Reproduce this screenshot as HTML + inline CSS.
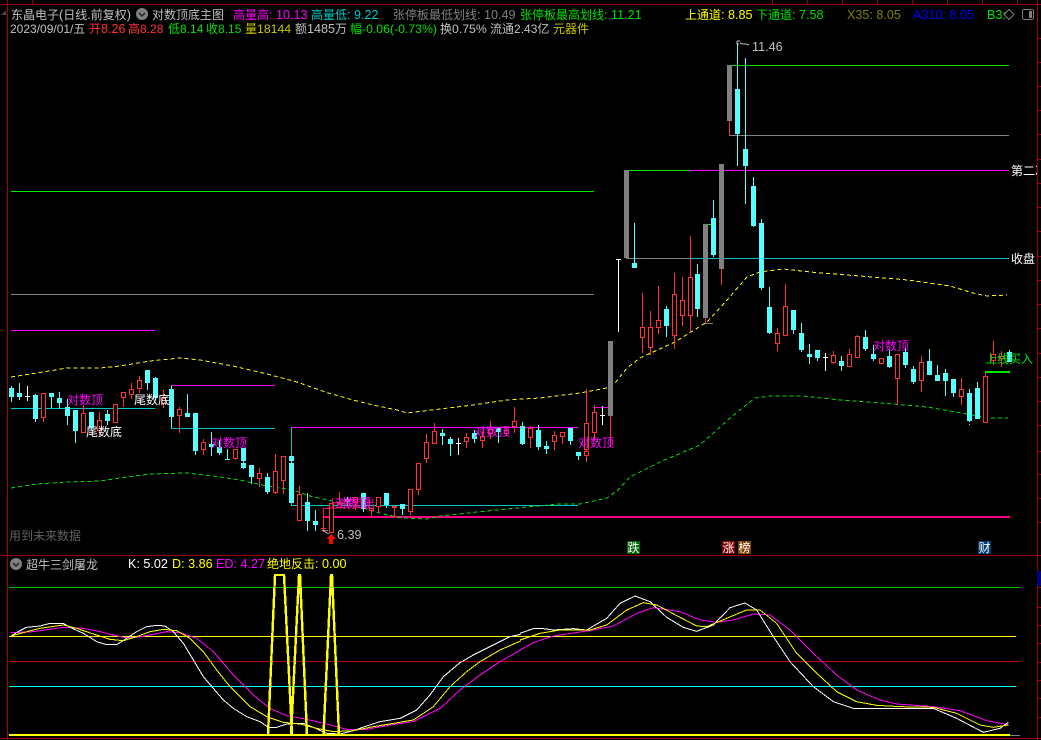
<!DOCTYPE html>
<html lang="zh"><head><meta charset="utf-8"><title>东晶电子</title>
<style>
html,body{margin:0;padding:0;background:#000;width:1041px;height:740px;overflow:hidden}
svg{display:block}
text{font-family:"Liberation Sans","WenQuanYi Zen Hei","Noto Sans CJK SC",sans-serif;font-size:12px}
.n{font-size:12.6px}
.d{font-size:12px}
.m{font-size:12.25px}
.c path,.c polyline,.c line,.c rect{shape-rendering:crispEdges}
</style></head><body>
<svg width="1041" height="740" viewBox="0 0 1041 740" xmlns="http://www.w3.org/2000/svg">
<rect width="1041" height="740" fill="#000"/>
<g class="c" fill="none">
<!-- frame -->
<path stroke="#a00000" d="M0 4.5H1041M0 555.5H1041M0 738.5H1041M7.5 0V740M1037.5 0V740M32.5 0V4M772.5 0V4M807.5 0V4M842.5 0V4M877.5 0V4M912.5 0V4M947.5 0V4M982.5 0V4M1017.5 0V4M1037 38.5h4M1037 62.5h4M1037 86.5h4M1037 110.5h4M1037 134.5h4M1037 159.5h4M1037 183.5h4M1037 207.5h4M1037 231.5h4M1037 256.5h4M1037 280.5h4M1037 304.5h4M1037 328.5h4M1037 353.5h4M1037 377.5h4M1037 401.5h4M1037 425.5h4M1037 451.5h4M1037 474.5h4M1037 498.5h4M1037 522.5h4M1037 587.5h4M1037 607.5h4M1037 625.5h4M1037 643.5h4M1037 662.5h4M1037 680.5h4M1037 698.5h4M1037 717.5h4"/>
<!-- horizontal levels -->
<path stroke="#00e800" d="M11 191.5H594M629 170.5H690M732 65.5H1009M708 224.5H713"/>
<path stroke="#808080" d="M11 294.5H594M626 258.5H690M729 135.5H1009M705 323.5H713M322 530.5H328"/>
<path stroke="#ff00ff" d="M11 330.5H155M171 385.5H275M291 427.5H578M690 170.5H1009M594 407.5H608"/>
<path stroke="#00c8c8" d="M11 408.5H155M171 428.5H275M291 505.5H578M690 258.5H1009M291.5 427V505M171.5 385V428"/>
<path stroke="#ff0080" stroke-width="2" d="M323 517H1010"/>
<path stroke="#ff0080" d="M323.5 508V517M323 508.5H331"/>
<path stroke="#00e800" stroke-width="2" d="M985 372H1010"/>
<!-- channel lines -->
<polyline stroke="#ffff00" stroke-dasharray="4 3" points="11,377 37,373 67,368 100,368 120,366 150,361 180,358 200,360 233,366 267,374 297,382 325,392 353,400 373,405 397,410 407,413 440,409 473,405 507,400 540,398 580,393 607,388 615,383 627,368 640,358 675,342 707,322 727,300 747,277 760,272 783,269 820,273 860,276 908,280 950,286 973,293 987,296 1007,295"/>
<polyline stroke="#00e000" stroke-dasharray="4 3" points="11,488 37,484 67,482 100,481 127,477 150,474 187,473 213,476 240,480 267,486 293,490 310,496 337,502 363,508 383,514 403,518 427,519 440,516 487,511 527,507 560,504 580,504 607,498 618,490 630,477 660,462 700,445 730,418 755,398 770,396 803,396 840,400 893,404 927,407 967,414 987,418 1008,418"/>
<!-- gray blocks -->
<path fill="#808080" d="M608 341h5v75h-5zM624 170h5v88h-5zM703 224h5v94h-5zM719 164h5v105h-5zM727 65h5v56h-5z"/>
<!-- cyan wicks -->
<path stroke="#54ffff" d="M11.5 386V402M19.5 383V400M35.5 394V422M51.5 393V408M59.5 392V409M67.5 399V425M75.5 410V443M91.5 412V430M107.5 410V425M147.5 370V390M155.5 377V400M171.5 386V428M187.5 394V417M195.5 413V455M211.5 432V456M219.5 440V455M227.5 449V459M225 459.5H230M243.5 448V469M251.5 465V484M267.5 473V494M291.5 456V503M307.5 493V531M315.5 510V531M347.5 497V507M363.5 493V512M386.5 493V508M402.5 504V515M442.5 429V445M450.5 437V456M474.5 430V443M498.5 428V443M522.5 422V445M538.5 425V450M546.5 441V454M570.5 428V445M578.5 452V460M634.5 223V268M666.5 306V337M697.5 264V317M713.5 200V257M737.5 43V166M745.5 58V204M753.5 177V227M761.5 219V290M769.5 287V334M793.5 310V334M801.5 323V352M809.5 344V364M817.5 350V361M841.5 356V371M865.5 330V351M873.5 345V361M889.5 350V368M905.5 348V368M913.5 366V384M929.5 349V375M937.5 365V381M945.5 369V396M953.5 379V397M969.5 389V422M969.5 424V425M977.5 382V419M1009.5 350V362"/>
<!-- cyan bodies -->
<path fill="#54ffff" d="M9 388h5V397h-5zM17 393h5V397h-5zM33 395h5V419h-5zM49 393h5V397h-5zM57 398h5V403h-5zM65 407h5V416h-5zM73 410h5V431h-5zM89 412h5V428h-5zM105 414h5V421h-5zM145 370h5V383h-5zM153 378h5V398h-5zM169 389h5V417h-5zM185 413h5V417h-5zM193 413h5V451h-5zM209 444h5V447h-5zM217 447h5V453h-5zM241 448h5V461h-5zM241 463h5V468h-5zM249 465h5V477h-5zM265 477h5V492h-5zM289 456h5V461h-5zM289 463h5V503h-5zM305 502h5V521h-5zM313 521h5V525h-5zM345 499h5V502h-5zM361 493h5V509h-5zM384 493h5V505h-5zM400 504h5V509h-5zM440 433h5V436h-5zM448 439h5V444h-5zM472 433h5V439h-5zM496 428h5V432h-5zM520 426h5V444h-5zM536 430h5V447h-5zM544 446h5V449h-5zM568 428h5V441h-5zM576 452h5V456h-5zM632 263h5V268h-5zM664 309h5V326h-5zM695 274h5V309h-5zM711 218h5V255h-5zM735 89h5V134h-5zM743 149h5V166h-5zM751 186h5V226h-5zM759 223h5V288h-5zM767 307h5V333h-5zM791 310h5V330h-5zM799 333h5V350h-5zM807 354h5V357h-5zM815 350h5V358h-5zM839 361h5V366h-5zM863 337h5V349h-5zM871 354h5V359h-5zM887 356h5V367h-5zM903 352h5V365h-5zM911 369h5V382h-5zM927 361h5V375h-5zM935 375h5V381h-5zM943 373h5V381h-5zM951 379h5V393h-5zM967 393h5V421h-5zM975 388h5V419h-5zM1007 352h5V362h-5z"/>
<!-- red wicks -->
<path stroke="#ff3232" d="M43.5 417V422M83.5 405V413M99.5 412V420M99.5 430V437M123.5 397V407M131.5 383V389M131.5 394V399M139.5 376V380M139.5 388V393M163.5 390V398M163.5 403V408M179.5 407V409M179.5 415V433M203.5 439V442M203.5 449V455M235.5 458V460M259.5 468V473M259.5 478V487M275.5 454V471M275.5 492V494M283.5 480V494M299.5 486V494M323.5 517V528M323.5 529V532M339.5 492V503M355.5 502V510M371.5 510V517M378.5 506V513M394.5 507V517M410.5 511V515M418.5 489V495M426.5 434V442M426.5 458V463M434.5 423V431M466.5 433V437M466.5 441V448M482.5 431V436M482.5 440V448M490.5 421V429M490.5 433V439M506.5 427V430M506.5 433V436M514.5 407V421M514.5 426V433M530.5 426V428M530.5 437V448M554.5 431V435M554.5 441V450M562.5 437V444M586.5 389V423M586.5 449V451M586.5 455V462M594.5 405V412M594.5 432V440M642.5 293V327M642.5 337V353M650.5 311V327M650.5 347V355M658.5 286V320M658.5 327V334M674.5 273V294M674.5 335V349M682.5 277V300M682.5 315V326M690.5 236V277M690.5 315V332M777.5 328V333M777.5 343V351M785.5 284V306M833.5 351V355M833.5 362V364M849.5 349V354M857.5 335V336M897.5 378V405M921.5 356V362M921.5 380V392M961.5 378V389M961.5 396V405M985.5 373V376M993.5 341V354M993.5 360V365M1001.5 351V356M1001.5 358V367M610.5 416V447M705.5 318V323M721.5 269V285M729.5 121V135M321 528.5H326"/>
<!-- red bodies: outer -->
<path fill="#ff3232" d="M41 393h5V418h-5zM81 413h5V433h-5zM97 420h5V431h-5zM113 404h5V423h-5zM121 392h5V398h-5zM129 389h5V395h-5zM137 380h5V389h-5zM161 398h5V404h-5zM177 409h5V416h-5zM201 442h5V450h-5zM233 449h5V459h-5zM257 473h5V479h-5zM273 471h5V493h-5zM281 456h5V481h-5zM297 494h5V521h-5zM329 503h5V533h-5zM337 503h5V508h-5zM353 497h5V503h-5zM369 508h5V511h-5zM376 497h5V507h-5zM392 506h5V508h-5zM408 489h5V512h-5zM416 463h5V490h-5zM424 442h5V459h-5zM432 431h5V444h-5zM464 437h5V442h-5zM480 436h5V441h-5zM488 429h5V434h-5zM504 430h5V434h-5zM512 421h5V427h-5zM528 428h5V438h-5zM552 435h5V442h-5zM560 432h5V437h-5zM584 423h5V450h-5zM584 451h5V456h-5zM592 412h5V433h-5zM640 327h5V338h-5zM648 327h5V348h-5zM656 320h5V328h-5zM672 294h5V336h-5zM680 300h5V316h-5zM688 277h5V316h-5zM775 333h5V344h-5zM783 306h5V336h-5zM831 355h5V363h-5zM847 354h5V367h-5zM855 336h5V358h-5zM879 358h5V364h-5zM895 354h5V379h-5zM919 362h5V381h-5zM959 389h5V397h-5zM983 376h5V423h-5zM991 354h5V361h-5zM999 356h5V359h-5z"/>
<!-- red bodies: hollow inner -->
<path fill="#000" d="M42 394h3V417h-3zM82 414h3V432h-3zM98 421h3V430h-3zM114 405h3V422h-3zM122 393h3V397h-3zM130 390h3V394h-3zM138 381h3V388h-3zM162 399h3V403h-3zM178 410h3V415h-3zM202 443h3V449h-3zM234 450h3V458h-3zM258 474h3V478h-3zM274 472h3V492h-3zM282 457h3V480h-3zM298 495h3V520h-3zM330 504h3V532h-3zM338 504h3V507h-3zM354 498h3V502h-3zM370 509h3V510h-3zM377 498h3V506h-3zM409 490h3V511h-3zM417 464h3V489h-3zM425 443h3V458h-3zM433 432h3V443h-3zM465 438h3V441h-3zM481 437h3V440h-3zM489 430h3V433h-3zM505 431h3V433h-3zM513 422h3V426h-3zM529 429h3V437h-3zM553 436h3V441h-3zM561 433h3V436h-3zM585 424h3V449h-3zM585 452h3V455h-3zM593 413h3V432h-3zM641 328h3V337h-3zM649 328h3V347h-3zM657 321h3V327h-3zM673 295h3V335h-3zM681 301h3V315h-3zM689 278h3V315h-3zM776 334h3V343h-3zM784 307h3V335h-3zM832 356h3V362h-3zM848 355h3V366h-3zM856 337h3V357h-3zM880 359h3V363h-3zM896 355h3V378h-3zM920 363h3V380h-3zM960 390h3V396h-3zM984 377h3V422h-3zM992 355h3V360h-3zM1000 357h3V358h-3z"/>
<!-- white dojis -->
<path stroke="#fff" d="M27.5 386V401M25 396.5H30M458.5 438V455M456 443.5H461M602.5 406V425M600 415.5H605M618.5 259V332M616 259.5H621M825.5 353V371M823 357.5H828"/>
<!-- red arrow -->
<path fill="#ff0000" stroke="none" d="M331 534l5 5h-3v5h-4v-5h-3z"/>
<!-- lower levels -->
<path stroke="#00c800" d="M9 587.5H1020"/>
<path stroke="#ffff00" d="M9 636.5H1016"/>
<path stroke="#c80000" d="M9 661.5H1020"/>
<path stroke="#00ffff" d="M9 686.5H1016"/>
<path stroke="#808080" d="M1010 735.5H1020M268 735.5H340"/>
<g stroke-width="3">
<g transform="translate(0 540) scale(.33333)">
<polyline stroke="#ff00ff" points="33,278 100,275 190,262 250,265 300,275 370,292 410,292 450,285 500,275 540,278 590,295 640,335 700,405 760,465 810,505 860,527 920,538 980,552 1040,568 1100,568 1170,555 1240,545 1320,505 1380,450 1440,405 1500,365 1562,330"/>
<polyline stroke="#fff" points="33,288 60,272 80,262 120,258 150,250 190,250 210,262 250,280 290,305 320,314 350,314 380,295 410,275 440,260 470,256 495,258 520,275 550,310 580,360 610,410 640,445 670,480 700,505 740,530 780,545 805,562 830,562 860,552 910,550 940,562 980,580 1020,582 1060,572 1100,558 1140,545 1200,535 1250,510 1290,465 1330,410 1380,368 1420,345 1480,315 1530,290 1562,283"/>
<polyline stroke="#ffff00" points="33,288 70,278 120,265 190,255 230,265 280,282 330,298 370,302 410,290 450,275 490,268 530,272 570,295 610,335 650,390 690,440 750,500 800,530 850,547 900,552 950,565 1000,575 1060,572 1120,560 1180,550 1240,540 1300,500 1350,440 1400,395 1440,365 1500,330 1562,303"/>
</g>
<g transform="translate(520 530) scale(.33333)">
<polyline stroke="#ff00ff" points="0,360 40,338 100,318 220,300 280,288 350,250 400,233 480,245 540,270 590,277 640,270 700,252 750,255 810,300 880,370 950,435 1010,480 1080,510 1130,522 1240,530 1320,542 1400,572 1465,584"/>
<polyline stroke="#fff" points="0,310 40,296 70,296 100,300 160,296 200,300 260,265 300,220 345,198 390,215 440,262 490,292 530,304 580,285 630,233 675,219 710,240 760,320 810,395 880,470 940,515 1000,535 1100,535 1240,535 1310,565 1390,607 1440,595 1465,577"/>
<polyline stroke="#ffff00" points="0,330 60,310 120,300 210,300 260,285 320,240 370,218 410,225 480,262 530,288 560,290 620,265 680,240 720,240 770,280 830,370 880,420 950,485 1010,515 1070,526 1140,530 1240,532 1310,550 1380,585 1420,592 1465,585"/>
</g>
</g>
<path stroke="#ffff00" stroke-width="2" d="M9 735H1010"/>
<path stroke="#ffff00" stroke-width="2.4" d="M268 735L275 575H284L292 735M291 735L299 575H300L307 735M323.5 735L331 575H332L339 735"/>
<!-- marker boxes -->
<path fill="#006400" d="M627 541h13v13h-13z"/>
<path fill="#800000" d="M722 541h13v13h-13z"/>
<path fill="#804000" d="M738 541h13v13h-13z"/>
<path fill="#003c6e" d="M978 541h13v13h-13z"/>
<path fill="#000080" d="M1037 571h4v15h-4z"/>
<!-- right top icon -->
<rect x="1022.5" y="9.5" width="11" height="10" rx="2" stroke="#808080"/>
<path fill="#808080" d="M1029 11h3v7h-3z"/>
<path fill="#505050" d="M1 15l5-5v5z"/>
</g>
<!-- circle buttons -->
<circle cx="142" cy="14" r="6" fill="#808080"/><path d="M139 13l3 3 3-3" stroke="#222" stroke-width="1.5" fill="none"/>
<circle cx="16" cy="564" r="6" fill="#808080"/><path d="M13 563l3 3 3-3" stroke="#222" stroke-width="1.5" fill="none"/>
<path d="M1009 9.500l5 5-5 5-5-5z" fill="none" stroke="#808080"/>
<!-- header row 1 -->
<text y="19" x="11" fill="#c0c0c0">东晶电子<tspan class="n">(</tspan>日线<tspan class="n">.</tspan>前复权<tspan class="n">)</tspan></text>
<text y="19" x="152" fill="#c0c0c0">对数顶底主图</text>
<text y="19" x="233" fill="#ff00ff">高量高<tspan class="n">: 10.13</tspan></text>
<text y="19" x="311" fill="#00c8c8">高量低<tspan class="n">: 9.22</tspan></text>
<text y="19" x="393" fill="#808080">张停板最低划线<tspan class="n">: 10.49</tspan></text>
<text y="19" x="520" fill="#00e000">张停板最高划线<tspan class="n">: 11.21</tspan></text>
<text y="19" x="685" fill="#ffff00">上通道<tspan class="n">: 8.85</tspan></text>
<text y="19" x="756" fill="#00e000">下通道<tspan class="n">: 7.58</tspan></text>
<text y="19" x="847" fill="#808000" class="n">X35: 8.05</text>
<text y="19" x="913" fill="#0000ff" class="n">A310: 8.05</text>
<text y="19" x="987" fill="#00e000" class="n">B3:</text>
<!-- header row 2 -->
<text y="33" x="10" fill="#c0c0c0"><tspan class="d">2023/09/01/</tspan>五</text>
<text y="33" x="89" fill="#ff3232">开<tspan class="n">8.26</tspan></text>
<text y="33" x="128" fill="#ff3232">高<tspan class="d">8.28</tspan></text>
<text y="33" x="168" fill="#00e000">低<tspan class="d">8.14</tspan></text>
<text y="33" x="206" fill="#00e000">收<tspan class="d">8.15</tspan></text>
<text y="33" x="245" fill="#c8c800">量<tspan class="m">18144</tspan></text>
<text y="33" x="295" fill="#c0c0c0">额<tspan class="n">1485</tspan>万</text>
<text y="33" x="350" fill="#00e000">幅<tspan class="m">-0.06(-0.73%)</tspan></text>
<text y="33" x="440" fill="#c0c0c0">换<tspan class="m">0.75%</tspan></text>
<text y="33" x="490" fill="#c0c0c0">流通<tspan class="d">2.43</tspan>亿</text>
<text y="33" x="553" fill="#c8c800">元器件</text>
<!-- chart labels -->
<text x="67" y="404" fill="#ff00ff">对数顶</text>
<text x="134" y="404" fill="#fff">尾数底</text>
<text x="86" y="436" fill="#fff">尾数底</text>
<text x="211" y="447" fill="#ff00ff">对数顶</text>
<text x="327" y="508" fill="#ff0080">上线卖出</text>
<text x="335" y="507" fill="#ff00ff">对数顶</text>
<text x="474" y="436" fill="#ff00ff">对数顶</text>
<text x="578" y="447" fill="#ff00ff">对数顶</text>
<text x="873" y="350" fill="#ff00ff">对数顶</text>
<text x="985" y="363" fill="#00e000">上线买入</text>
<svg x="1011" y="160" width="26" height="20"><text x="0" y="15" fill="#fff">第二次</text></svg>
<text x="1011" y="263" fill="#fff">收盘</text>
<text x="752" y="51" fill="#c0c0c0" class="n">11.46</text>
<text x="337" y="539" fill="#c0c0c0" class="n">6.39</text>
<path d="M737 41h3M737 41v3h2M740 43l3 1 3 0 3 1" stroke="#c0c0c0" fill="none"/>
<path d="M322 530l7 4" stroke="#c0c0c0" fill="none"/>
<text x="9" y="540" fill="#606060">用到未来数据</text>
<!-- marker text -->
<text x="627.500" y="552" fill="#fff">跌</text>
<text x="722.500" y="552" fill="#fff">涨</text>
<text x="738.500" y="552" fill="#fff">榜</text>
<text x="978.500" y="552" fill="#fff">财</text>
<!-- lower panel header -->
<text x="26" y="569" fill="#c0c0c0">超牛三剑屠龙</text>
<text x="128" y="568" fill="#fff" class="n">K: 5.02</text>
<text x="172" y="568" fill="#ffff00" class="n">D: 3.86</text>
<text x="216" y="568" fill="#ff00ff" class="n">ED: 4.27</text>
<text x="267" y="568" fill="#ffff00">绝地反击<tspan class="n">: 0.00</tspan></text>
</svg>
</body></html>
